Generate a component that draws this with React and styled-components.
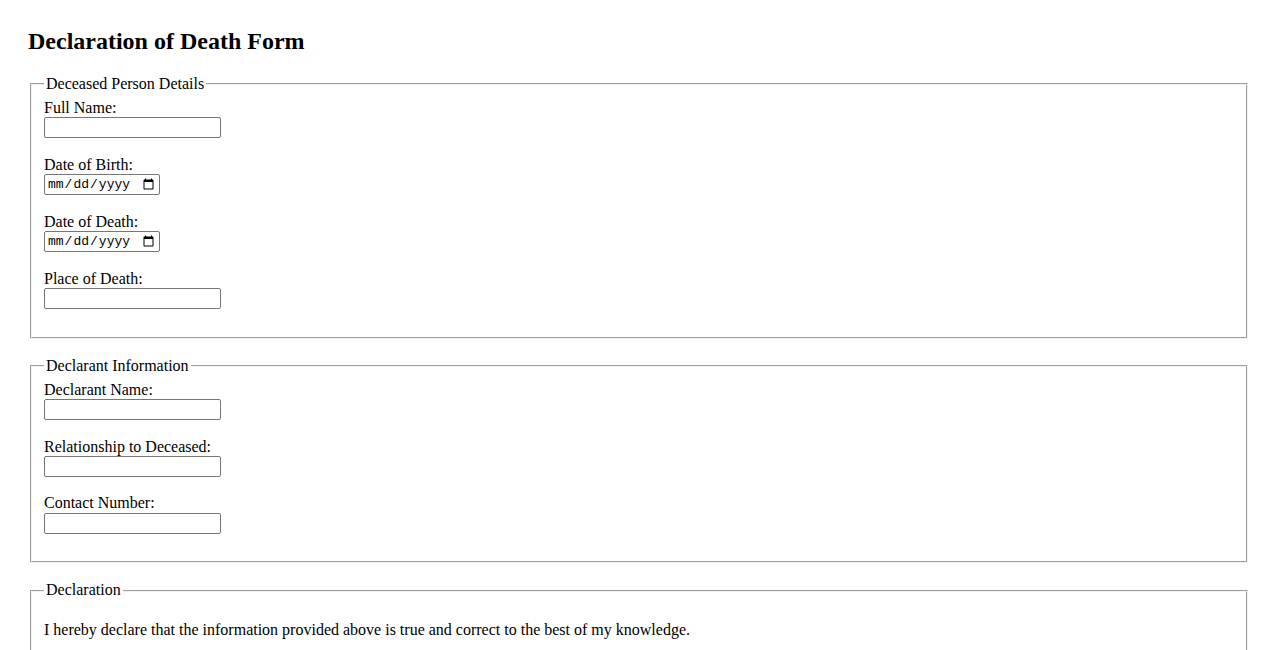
import React from "react";
import styled, { createGlobalStyle } from "styled-components";

const Global = createGlobalStyle`
  html, body { margin: 0; padding: 0; background: #fff; }
  body { font-family: "Liberation Serif", "Times New Roman", serif; font-size: 16px; color: #000; }
`;

const Page = styled.div`
  padding: 28px;
`;

const Title = styled.h2`
  margin: 0 0 20px;
  font-size: 24px;
  font-weight: bold;
  line-height: 27px;
`;

const Form = styled.form`
  display: flex;
  flex-direction: column;
`;

const Section = styled.fieldset`
  margin: 0 2px 18px;
  padding: 5.6px 12px 10px;
  border: 2px groove #f2f2f2;
  min-width: 0;
`;

const Legend = styled.legend`
  padding: 0 2px;
  line-height: 18.4px;
`;

const Field = styled.div`
  display: flex;
  flex-direction: column;
  align-items: flex-start;
  margin-bottom: 17.5px;
`;

const Label = styled.label`
  line-height: 18.4px;
`;

const Input = styled.input`
  box-sizing: border-box;
  width: ${(p) => (p.type === "date" ? "116px" : "177px")};
  height: 21px;
  margin: 0;
  padding: 1px 2px;
  border: 1px solid #767676;
  border-radius: 2px;
  background: #fff;
  font-family: ${(p) => (p.type === "date" ? '"Liberation Mono", monospace' : '"Liberation Sans", Arial, sans-serif')};
  font-size: 13px;
  color: #000;
`;

const Text = styled.p`
  margin: 15.5px 0 8px;
  line-height: 18.4px;
`;

function F({ id, label, type = "text" }) {
  return (
    <Field>
      <Label htmlFor={id}>{label}</Label>
      <Input id={id} type={type} />
    </Field>
  );
}

export default function App() {
  return (
    <Page>
      <Global />
      <Title>Declaration of Death Form</Title>
      <Form onSubmit={(e) => e.preventDefault()}>
        <Section>
          <Legend>Deceased Person Details</Legend>
          <F id="fullName" label="Full Name:" />
          <F id="dob" label="Date of Birth:" type="date" />
          <F id="dod" label="Date of Death:" type="date" />
          <F id="pod" label="Place of Death:" />
        </Section>
        <Section>
          <Legend>Declarant Information</Legend>
          <F id="dname" label="Declarant Name:" />
          <F id="rel" label="Relationship to Deceased:" />
          <F id="contact" label="Contact Number:" />
        </Section>
        <Section>
          <Legend>Declaration</Legend>
          <Text>I hereby declare that the information provided above is true and correct to the best of my knowledge.</Text>
        </Section>
      </Form>
    </Page>
  );
}
